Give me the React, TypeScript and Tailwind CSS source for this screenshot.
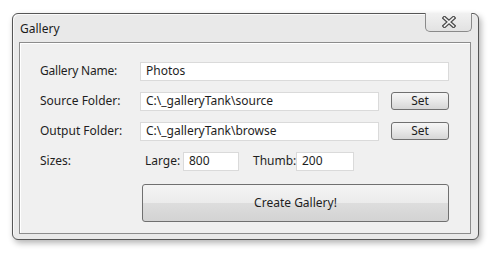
import React from "react";

const font = { fontFamily: '"Noto Sans", "Open Sans", sans-serif' };

const TextBox = ({ value, width }: { value: string; width: string }) => (
  <div
    className={`${width} h-[19px] bg-white border border-[#dadada] flex items-center pl-[5px] text-[12px] text-[#1e1e1e]`}
  >
    {value}
  </div>
);

const SetButton = () => (
  <button className="w-[58px] h-[18px] rounded-[3px] border border-[#707070] bg-gradient-to-b from-[#f6f6f6] via-[#e8e8e8] to-[#d6d6d6] text-[12px] leading-none text-[#1e1e1e] flex items-center justify-center">
    Set
  </button>
);

export default function App() {
  return (
    <div className="w-[495px] h-[255px] bg-white pt-[13px] pl-[12px]" style={font}>
      <div className="relative w-[467px] h-[227px] rounded-[6px] border border-[#555] bg-[#e9e9e9] shadow-[inset_1px_1px_0_#fafafa,2px_3px_6px_rgba(0,0,0,0.3)] flex flex-col">
        {/* title bar */}
        <div className="h-[28px] flex items-start justify-between pl-[7px] pr-[6px]">
          <span className="mt-[6px] text-[12px] text-[#1a1a1a]">Gallery</span>
          <div className="w-[47px] h-[19px] -mt-px rounded-b-[5px] border border-[#8a8a8a] border-t-0 bg-gradient-to-b from-[#f1f1f1] to-[#e2e2e2] flex items-center justify-center">
            <svg width="14" height="12" viewBox="0 0 14 12">
              <path d="M2.5 2 L11.5 10 M11.5 2 L2.5 10" stroke="#4a4a4a" strokeWidth="4" strokeLinecap="square" />
              <path d="M2.5 2 L11.5 10 M11.5 2 L2.5 10" stroke="#f4f4f4" strokeWidth="1.6" strokeLinecap="square" />
            </svg>
          </div>
        </div>

        {/* client area */}
        <div className="ml-[6px] mr-[7px] mb-[5px] flex-1 border border-[#8c8c8c] bg-[#f0f0f0] shadow-[inset_1px_1px_0_#ffffff] pt-[13px] pl-[20px] text-[12px] text-[#1e1e1e]">
          <div className="grid grid-cols-[100px_1fr] auto-rows-[30px] items-center">
            <span className="tracking-[-0.2px]">Gallery Name:</span>
            <TextBox value="Photos" width="w-[309px]" />

            <span>Source Folder:</span>
            <div className="flex items-center gap-[12px]">
              <TextBox value="C:\_galleryTank\source" width="w-[239px]" />
              <SetButton />
            </div>

            <span>Output Folder:</span>
            <div className="flex items-center gap-[12px]">
              <TextBox value="C:\_galleryTank\browse" width="w-[239px]" />
              <SetButton />
            </div>

            <span>Sizes:</span>
            <div className="flex items-center pl-[5px]">
              <span className="w-[38px]">Large:</span>
              <TextBox value="800" width="w-[56px]" />
              <span className="ml-[14px] w-[43px]">Thumb:</span>
              <TextBox value="200" width="w-[58px]" />
            </div>
          </div>

          <div className="mt-[8px] pl-[102px]">
            <button className="w-[307px] h-[38px] rounded-[3px] border border-[#707070] bg-[linear-gradient(to_bottom,#f4f4f4_0%,#ebebeb_50%,#dddddd_51%,#d3d3d3_100%)] text-[12px] text-[#1e1e1e] flex items-center justify-center">
              Create Gallery!
            </button>
          </div>
        </div>
      </div>
    </div>
  );
}
